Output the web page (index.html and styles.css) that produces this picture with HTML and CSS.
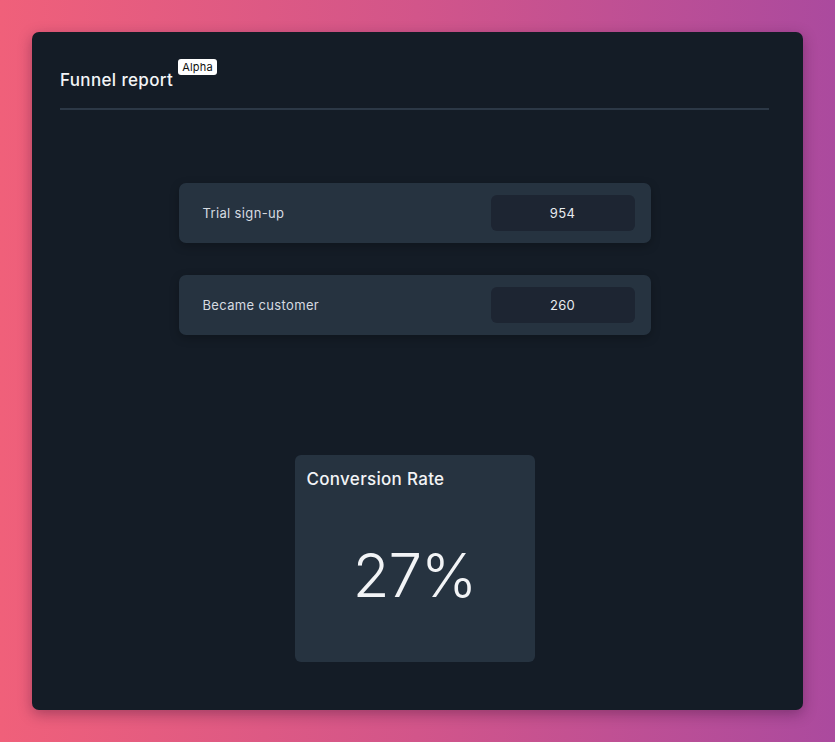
FILE: index.html
```html
<!DOCTYPE html>
<html>

<head>
    <meta charset="UTF-8">
    <title>Funnel report</title>
    <link rel="stylesheet" href="styles.css">
</head>

<body>
    <div class="report">
        <div class="report-header">
            <h1 class="report-title">Funnel report</h1>
            <span class="badge">Alpha</span>
        </div>

        <div class="steps">
            <div class="step">
                <span class="step-label">Trial sign-up</span>
                <span class="step-value">954</span>
            </div>
            <div class="step">
                <span class="step-label">Became customer</span>
                <span class="step-value">260</span>
            </div>
        </div>

        <div class="rate-card">
            <h2 class="rate-title">Conversion Rate</h2>
            <div class="rate-value">27%</div>
        </div>
    </div>
</body>

</html>
```

FILE: styles.css
```css
/* page */
html,
body {
    height: 100%;
}

body {
    margin: 0;
    padding: 32px;
    box-sizing: border-box;
    background: linear-gradient(90deg, #f0607a 0%, #d2558a 50%, #ab4a9e 100%);
    font-family: Inter, "Noto Sans", sans-serif;
    color: #f2f4f6;
}

.report {
    height: 678px;
    box-sizing: border-box;
    padding: 0 34px 48px 28px;
    background: #141c26;
    border-radius: 7px;
    box-shadow: 0 4px 14px rgba(40, 10, 40, 0.35);
    display: flex;
    flex-direction: column;
    align-items: center;
}

.report-header {
    align-self: stretch;
    display: flex;
    align-items: flex-start;
    gap: 5px;
    padding-top: 36px;
    padding-bottom: 17px;
    border-bottom: 2px solid #2c3846;
}

.report-title {
    margin: 0;
    margin-top: 1px;
    font-size: 17px;
    font-weight: 500;
    line-height: 22px;
    letter-spacing: 0.35px;
}

.badge {
    margin-top: -9px;
    padding: 1px 4px;
    background: #ffffff;
    color: #111111;
    font-size: 11px;
    line-height: 14px;
    letter-spacing: 0.2px;
    border-radius: 3px;
}

/* funnel steps */
.steps {
    margin-top: 73px;
    display: flex;
    flex-direction: column;
    gap: 32px;
}

.step {
    width: 472px;
    height: 60px;
    box-sizing: border-box;
    padding: 0 16px 0 24px;
    display: flex;
    align-items: center;
    justify-content: space-between;
    background: #263340;
    border-radius: 7px;
    box-shadow: 0 3px 10px rgba(0, 0, 0, 0.25);
}

.step-label {
    font-size: 13px;
    letter-spacing: 0.35px;
    color: #d6dbe0;
}

.step-value {
    width: 144px;
    height: 36px;
    line-height: 36px;
    text-align: center;
    background: #1d2532;
    border-radius: 6px;
    font-size: 13px;
    letter-spacing: 0.3px;
    color: #e8ecef;
}

/* conversion */
.rate-card {
    margin-top: auto;
    width: 240px;
    height: 207px;
    box-sizing: border-box;
    padding: 14px 12px;
    background: #263340;
    border-radius: 6px;
    display: flex;
    flex-direction: column;
}

.rate-title {
    margin: 0;
    font-size: 17px;
    font-weight: 500;
    line-height: 20px;
    letter-spacing: 0.3px;
}

.rate-value {
    flex: 1;
    display: flex;
    align-items: center;
    justify-content: center;
    padding-top: 12px;
    font-size: 60px;
    font-weight: 300;
    letter-spacing: -1px;
}
```
